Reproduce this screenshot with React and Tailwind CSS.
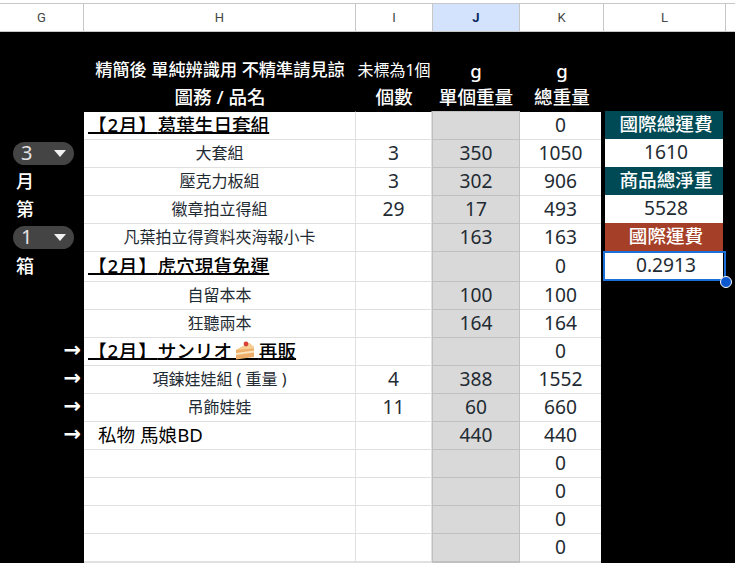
import React from "react";

const cjk = "[font-family:'Noto_Sans','Noto_Sans_CJK_TC',sans-serif]";

const rows = [
  { h: 28, g: null, tag: "【2月】", name: "葛葉生日套組", title: true, k: 0, l: { kind: "teal", text: "國際總運費" } },
  { h: 28, g: { chip: "3" }, name: "大套組", i: 3, j: 350, k: 1050, l: { kind: "white", text: "1610" } },
  { h: 28, g: { text: "月" }, name: "壓克力板組", i: 3, j: 302, k: 906, l: { kind: "teal", text: "商品總淨重" } },
  { h: 28, g: { text: "第" }, name: "徽章拍立得組", i: 29, j: 17, k: 493, l: { kind: "white", text: "5528" } },
  { h: 28, g: { chip: "1" }, name: "凡葉拍立得資料夾海報小卡", j: 163, k: 163, l: { kind: "red", text: "國際運費" } },
  { h: 30, g: { text: "箱" }, tag: "【2月】", name: "虎穴現貨免運", title: true, k: 0, l: { kind: "selected", text: "0.2913" } },
  { h: 28, name: "自留本本", j: 100, k: 100 },
  { h: 28, name: "狂聽兩本", j: 164, k: 164 },
  { h: 28, g: { arrow: true }, tag: "【2月】", name: "サンリオ", cake: "再販", title: true, k: 0 },
  { h: 28, g: { arrow: true }, name: "項鍊娃娃組 ( 重量 )", i: 4, j: 388, k: 1552 },
  { h: 28, g: { arrow: true }, name: "吊飾娃娃", i: 11, j: 60, k: 660 },
  { h: 28, g: { arrow: true }, name: "私物 馬娘BD", plain: true, j: 440, k: 440 },
  { h: 28, k: 0 },
  { h: 28, k: 0 },
  { h: 28, k: 0 },
  { h: 28, k: 0 },
];

// sits over a spaced-out nbsp so the underline keeps running below it
const Cake = () => (
  <span className="relative tracking-[22px]">
    {"\u00a0"}
    <svg viewBox="0 0 20 19" className="absolute left-[3px] top-[3px] w-5 h-[19px]">
      <path d="M1 9 L14 2 L19 6 L19 16 L1 18.5 Z" fill="#eeae6b" />
      <path d="M1 9 L14 2 L19 6 L19 7.5 Z" fill="#f7cf94" />
      <path d="M1 12 L19 9.5 L19 11.5 L1 14 Z" fill="#fbe3bd" />
      <circle cx="11" cy="3" r="2.4" fill="#d8403a" />
    </svg>
  </span>
);

const GCell = ({ g }) => {
  if (!g) return <div className="bg-black" />;
  if (g.chip) {
    return (
      <div className="bg-black flex items-center pl-[13px]">
        <div className="w-[61px] h-[23px] rounded-full bg-[#444444] flex items-center justify-between pl-[8px] pr-[8px] text-[20px] leading-none text-[#e3e3e3]">
          <span>{g.chip}</span>
          <svg viewBox="0 0 12 7" className="w-3 h-[7px]">
            <path d="M0 0 H12 L6 7 Z" fill="#f1f1f1" />
          </svg>
        </div>
      </div>
    );
  }
  if (g.arrow) {
    return (
      <div className="bg-black flex items-center justify-end pr-[3px] pb-[2px] text-white text-[21px] font-bold font-['DejaVu_Sans',sans-serif]">
        →
      </div>
    );
  }
  return <div className="bg-black flex items-center pl-[16px] text-white text-[18px] font-medium">{g.text}</div>;
};

const LCell = ({ l }) => {
  if (!l) return <div className="bg-black" />;
  if (l.kind === "selected") {
    return (
      <div className="relative bg-black pl-px pr-[3px]">
        <div className="h-full bg-white flex items-center justify-center pl-1 pb-[2px] text-[19.2px] text-[#1f2b33]">{l.text}</div>
        <div className="absolute -left-px top-0 w-[123px] h-[30px] border-2 border-[#1a6fd8]" />
        <div className="absolute left-[116px] top-[25px] w-3 h-3 rounded-full bg-[#0b57d0] border border-white" />
      </div>
    );
  }
  const bg = {
    teal: "bg-[#004a55] text-white font-medium text-[18.6px]",
    red: "bg-[#a63f28] text-white font-medium text-[18.6px]",
    white: "bg-white text-[#1f2b33] text-[19.2px]",
  }[l.kind];
  return (
    <div className="bg-black pl-px pr-[3px]">
      <div className={`h-full flex items-center justify-center pl-1 pb-[2px] ${bg}`}>{l.text}</div>
    </div>
  );
};

const NameCell = ({ row, first }) => {
  const border = first ? "border-t border-t-black" : "border-t border-t-[#e0e0e0]";
  let inner = null;
  if (row.title) {
    inner = (
      <span className="ml-[4px] text-[18.6px] font-medium text-black underline decoration-[1.5px] underline-offset-0 [text-decoration-skip-ink:none]">
        <span className="tracking-[0.8px]">{row.tag}</span>
        {row.name}
        {row.cake && <Cake />}
        {row.cake}
      </span>
    );
  } else if (row.plain) {
    inner = <span className="pl-[14px] text-[18.6px] font-normal text-black">{row.name}</span>;
  } else if (row.name) {
    inner = <span className="w-full text-center text-[16px] text-[#1f2b33]">{row.name}</span>;
  }
  return <div className={`bg-white flex items-center pb-[2px] border-r border-r-[#e0e0e0] ${border}`}>{inner}</div>;
};

export default function App() {
  return (
    <div className={`w-[735px] h-[563px] overflow-hidden bg-black ${cjk}`}>
      <div className="h-[3px] bg-white" />
      <div className="grid grid-cols-[84px_272px_77px_87px_84px_122px_9px] h-[29px] bg-white border-y border-[#c7c7c7] text-[13px] text-[#444746] font-['Roboto',sans-serif]">
        <div className="flex items-center justify-center border-r border-[#c7c7c7]">G</div>
        <div className="flex items-center justify-center border-r border-[#c7c7c7]">H</div>
        <div className="flex items-center justify-center border-r border-[#c7c7c7]">I</div>
        <div className="flex items-center justify-center border-r border-[#c7c7c7] bg-[#d3e3fd] font-bold text-[#0b2a5c]">J</div>
        <div className="flex items-center justify-center border-r border-[#c7c7c7]">K</div>
        <div className="flex items-center justify-center border-r border-[#c7c7c7]">L</div>
        <div />
      </div>

      <div className="grid grid-cols-[84px_272px_76px_88px_84px] grid-rows-[24px_27px_28px] text-white font-medium text-center h-[79px] leading-[20px]">
        <div className="col-span-5" />
        <div />
        <div className="text-[17.2px] flex items-center justify-center">精簡後 單純辨識用 不精準請見諒</div>
        <div className="text-[16px] font-normal flex items-center justify-center">未標為1個</div>
        <div className="text-[18.6px] pt-[2px] flex items-center justify-center">g</div>
        <div className="text-[18.6px] pt-[2px] flex items-center justify-center">g</div>
        <div />
        <div className="text-[18.6px] flex items-center justify-center">圖務 / 品名</div>
        <div className="text-[18.6px] flex items-center justify-center">個數</div>
        <div className="text-[18.6px] flex items-center justify-center">單個重量</div>
        <div className="text-[18.6px] flex items-center justify-center">總重量</div>
      </div>

      {rows.map((row, n) => {
        const border = n === 0 ? "border-t border-t-black" : "border-t border-t-[#e0e0e0]";
        return (
          <div
            key={n}
            className="grid grid-cols-[84px_272px_76px_88px_84px_122px_9px] leading-[20px]"
            style={{ height: row.h }}
          >
            <GCell g={row.g} />
            <NameCell row={row} first={n === 0} />
            <div className={`bg-white flex items-center justify-center pb-[2px] text-[19.2px] text-[#1f2b33] border-r border-r-[#e0e0e0] ${border}`}>
              {row.i}
            </div>
            <div className="bg-[#d9d9d9] flex items-center justify-center pb-[2px] text-[19.2px] text-[#1f2b33] border-x border-x-[#c0c0c0] border-t border-t-[#c0c0c0]">
              {row.j}
            </div>
            <div className="border-r-[3px] border-r-black">
              <div className={`h-full bg-white flex items-center justify-center pb-[2px] text-[19.2px] text-[#1f2b33] ${border}`}>
                {row.k}
              </div>
            </div>
            <LCell l={row.l} />
            <div className="bg-black" />
          </div>
        );
      })}
      <div className="grid grid-cols-[84px_272px_76px_88px_84px] h-[2px]">
        <div />
        <div className="bg-[#e0e0e0]" />
        <div className="bg-[#e0e0e0]" />
        <div className="bg-[#c0c0c0]" />
        <div className="bg-[#e0e0e0] mr-[3px]" />
      </div>
    </div>
  );
}
